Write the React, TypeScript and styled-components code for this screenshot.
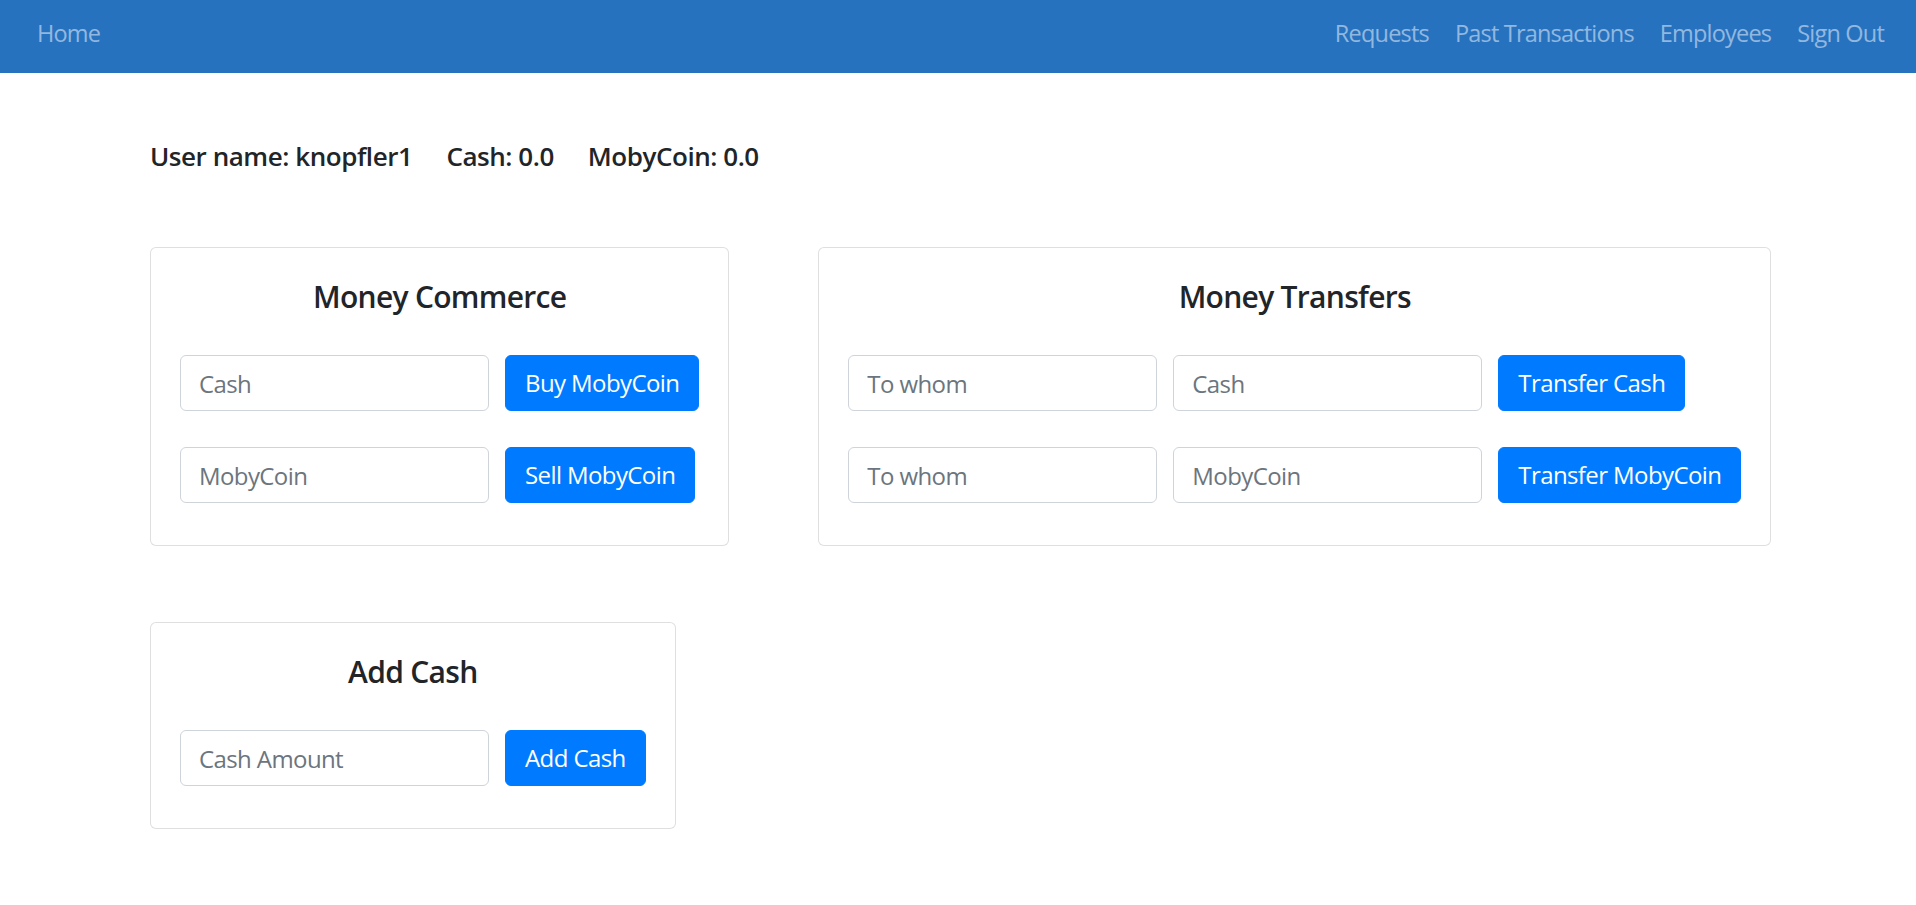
import React from 'react';
import styled, { createGlobalStyle } from 'styled-components';

const GlobalStyle = createGlobalStyle`
  html, body {
    margin: 0;
    padding: 0;
    background: #ffffff;
  }

  body {
    font-family: "Open Sans", "Segoe UI", sans-serif;
    color: #212529;
  }
`;

const NavBar = styled.nav`
  display: flex;
  justify-content: space-between;
  align-items: flex-start;
  height: 73px;
  padding: 0 19px 0 24px;
  background: #2672bf;
  box-sizing: border-box;
`;

const NavGroup = styled.div`
  display: flex;
`;

const NavLink = styled.a`
  display: block;
  padding: 15px 13px 0;
  font-size: 23.5px;
  line-height: 36px;
  letter-spacing: -0.8px;
  color: rgba(255, 255, 255, 0.5);
  text-decoration: none;
  cursor: pointer;
`;

const Main = styled.main`
  padding: 64px 150px 60px;
`;

const UserInfo = styled.div`
  display: flex;
  gap: 34px;
  font-size: 26px;
  line-height: 39px;
  font-weight: 600;
  letter-spacing: -0.45px;
  color: #212529;
`;

const CardRow = styled.div`
  display: flex;
  align-items: flex-start;
  gap: 89px;
  margin-top: ${(p: { $top: number }) => p.$top}px;
`;

const Card = styled.section`
  display: flex;
  flex-direction: column;
  align-items: flex-start;
  padding: 31px 29px 42px;
  border: 1px solid rgba(0, 0, 0, 0.125);
  border-radius: 6px;
  background: #ffffff;
`;

const CardTitle = styled.h5`
  align-self: stretch;
  margin: 0 0 40px;
  font-size: 30px;
  line-height: 36px;
  font-weight: 600;
  letter-spacing: -0.7px;
  text-align: center;
  color: #212529;
`;

const FormList = styled.div`
  display: flex;
  flex-direction: column;
  gap: 36px;
`;

const FormRow = styled.div`
  display: flex;
  gap: 16px;
`;

const TextInput = styled.input`
  width: 309px;
  height: 56px;
  box-sizing: border-box;
  padding: 0 18px;
  border: 1px solid #ced4da;
  border-radius: 6px;
  font-family: "Open Sans", "Segoe UI", sans-serif;
  font-size: 24px;
  letter-spacing: -0.6px;
  color: #495057;
  background: #ffffff;
  outline: none;

  &::placeholder {
    color: #6c757d;
    opacity: 1;
  }
`;

const ActionButton = styled.button`
  height: 56px;
  box-sizing: border-box;
  padding: 0 19px;
  border: 1px solid #007bff;
  border-radius: 6px;
  background: #007bff;
  color: #ffffff;
  font-family: "Open Sans", "Segoe UI", sans-serif;
  font-size: 24px;
  line-height: 36px;
  letter-spacing: -0.6px;
  white-space: nowrap;
  cursor: pointer;
`;

type FieldRow = {
  fields: string[];
  action: string;
};

const commerceRows: FieldRow[] = [
  { fields: ['Cash'], action: 'Buy MobyCoin' },
  { fields: ['MobyCoin'], action: 'Sell MobyCoin' },
];

const transferRows: FieldRow[] = [
  { fields: ['To whom', 'Cash'], action: 'Transfer Cash' },
  { fields: ['To whom', 'MobyCoin'], action: 'Transfer MobyCoin' },
];

const addCashRows: FieldRow[] = [{ fields: ['Cash Amount'], action: 'Add Cash' }];

function FormCard({ title, rows }: { title: string; rows: FieldRow[] }) {
  return (
    <Card>
      <CardTitle>{title}</CardTitle>
      <FormList>
        {rows.map((row, i) => (
          <FormRow key={i}>
            {row.fields.map((f, j) => (
              <TextInput key={j} type="text" placeholder={f} />
            ))}
            <ActionButton>{row.action}</ActionButton>
          </FormRow>
        ))}
      </FormList>
    </Card>
  );
}

function App() {
  return (
    <>
      <GlobalStyle />
      <NavBar>
        <NavGroup>
          <NavLink>Home</NavLink>
        </NavGroup>
        <NavGroup>
          <NavLink>Requests</NavLink>
          <NavLink>Past Transactions</NavLink>
          <NavLink>Employees</NavLink>
          <NavLink>Sign Out</NavLink>
        </NavGroup>
      </NavBar>

      <Main>
        <UserInfo>
          <span>User name: knopfler1</span>
          <span>Cash: 0.0</span>
          <span>MobyCoin: 0.0</span>
        </UserInfo>

        <CardRow $top={71}>
          <FormCard title="Money Commerce" rows={commerceRows} />
          <FormCard title="Money Transfers" rows={transferRows} />
        </CardRow>

        <CardRow $top={76}>
          <FormCard title="Add Cash" rows={addCashRows} />
        </CardRow>
      </Main>
    </>
  );
}

export default App;
